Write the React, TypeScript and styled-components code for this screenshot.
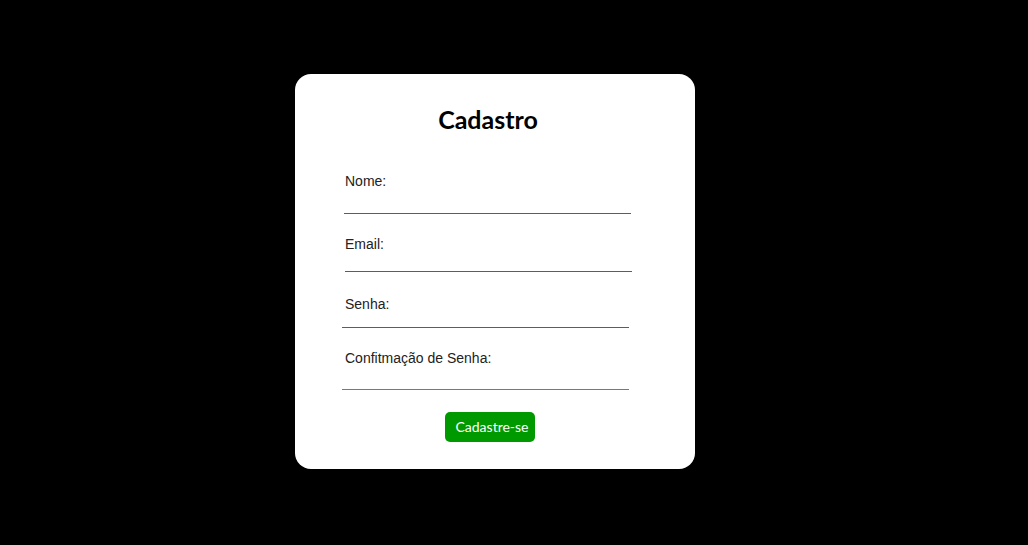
import React from "react";
import styled, { createGlobalStyle } from "styled-components";

const Global = createGlobalStyle`
  html, body { margin: 0; padding: 0; background: #000; }
  body { font-family: "Liberation Sans", Arial, sans-serif; }
  * { box-sizing: border-box; }
`;

const Page = styled.div`
  min-height: 545px;
  display: flex;
  justify-content: center;
  align-items: flex-start;
  padding: 74px 38px 0 0;
  background: #000;
`;

const Card = styled.form`
  width: 400px;
  height: 395px;
  background: #fff;
  border-radius: 16px;
  padding: 30px 64px 27px 50px;
  display: flex;
  flex-direction: column;
`;

const Title = styled.h1`
  margin: 0 0 39px;
  font-family: Lato, "Liberation Sans", sans-serif;
  font-weight: 700;
  font-size: 25px;
  line-height: 30px;
  color: #000;
  text-align: center;
`;

const Field = styled.div<{ $after: number }>`
  display: flex;
  flex-direction: column;
  margin-bottom: ${(p) => p.$after}px;
`;

const Label = styled.label`
  font-family: "Liberation Sans", Arial, sans-serif;
  font-size: 14px;
  line-height: 16px;
  color: #222;
`;

const Input = styled.input<{ $h: number; $shift: number; $active?: boolean }>`
  -webkit-appearance: none;
  appearance: none;
  display: block;
  width: 287px;
  height: ${(p) => p.$h}px;
  margin-left: ${(p) => p.$shift}px;
  border: 0;
  border-radius: 0;
  border-bottom: 1px solid ${(p) => (p.$active ? "#00cc00" : "#129212")};
  outline: none;
  background: transparent;
  padding: 0;
  font-family: "Liberation Sans", Arial, sans-serif;
  font-size: 14px;
`;

const Button = styled.button`
  align-self: center;
  margin-left: 4px;
  height: 30px;
  padding: 0 6px 0 10px;
  min-width: 89px;
  border: none;
  border-radius: 5px;
  background: #009a00;
  color: #fff;
  font-family: Lato, "Liberation Sans", sans-serif;
  font-size: 14px;
  line-height: 30px;
  text-align: left;
  cursor: pointer;
`;

const fields = [
  { label: "Nome:", h: 25, shift: -1, after: 22, type: "text" },
  { label: "Email:", h: 20, shift: 0, after: 24, type: "email" },
  { label: "Senha:", h: 16, shift: -3, after: 22, type: "password" },
  { label: "Confitmação de Senha:", h: 24, shift: -3, after: 22, type: "password", active: true },
];

export default function App() {
  return (
    <>
      <Global />
      <Page>
        <Card onSubmit={(e) => e.preventDefault()}>
          <Title>Cadastro</Title>
          {fields.map((f, i) => (
            <Field key={i} $after={f.after}>
              <Label>{f.label}</Label>
              <Input type={f.type} $h={f.h} $shift={f.shift} $active={f.active} />
            </Field>
          ))}
          <Button type="submit">Cadastre-se</Button>
        </Card>
      </Page>
    </>
  );
}
